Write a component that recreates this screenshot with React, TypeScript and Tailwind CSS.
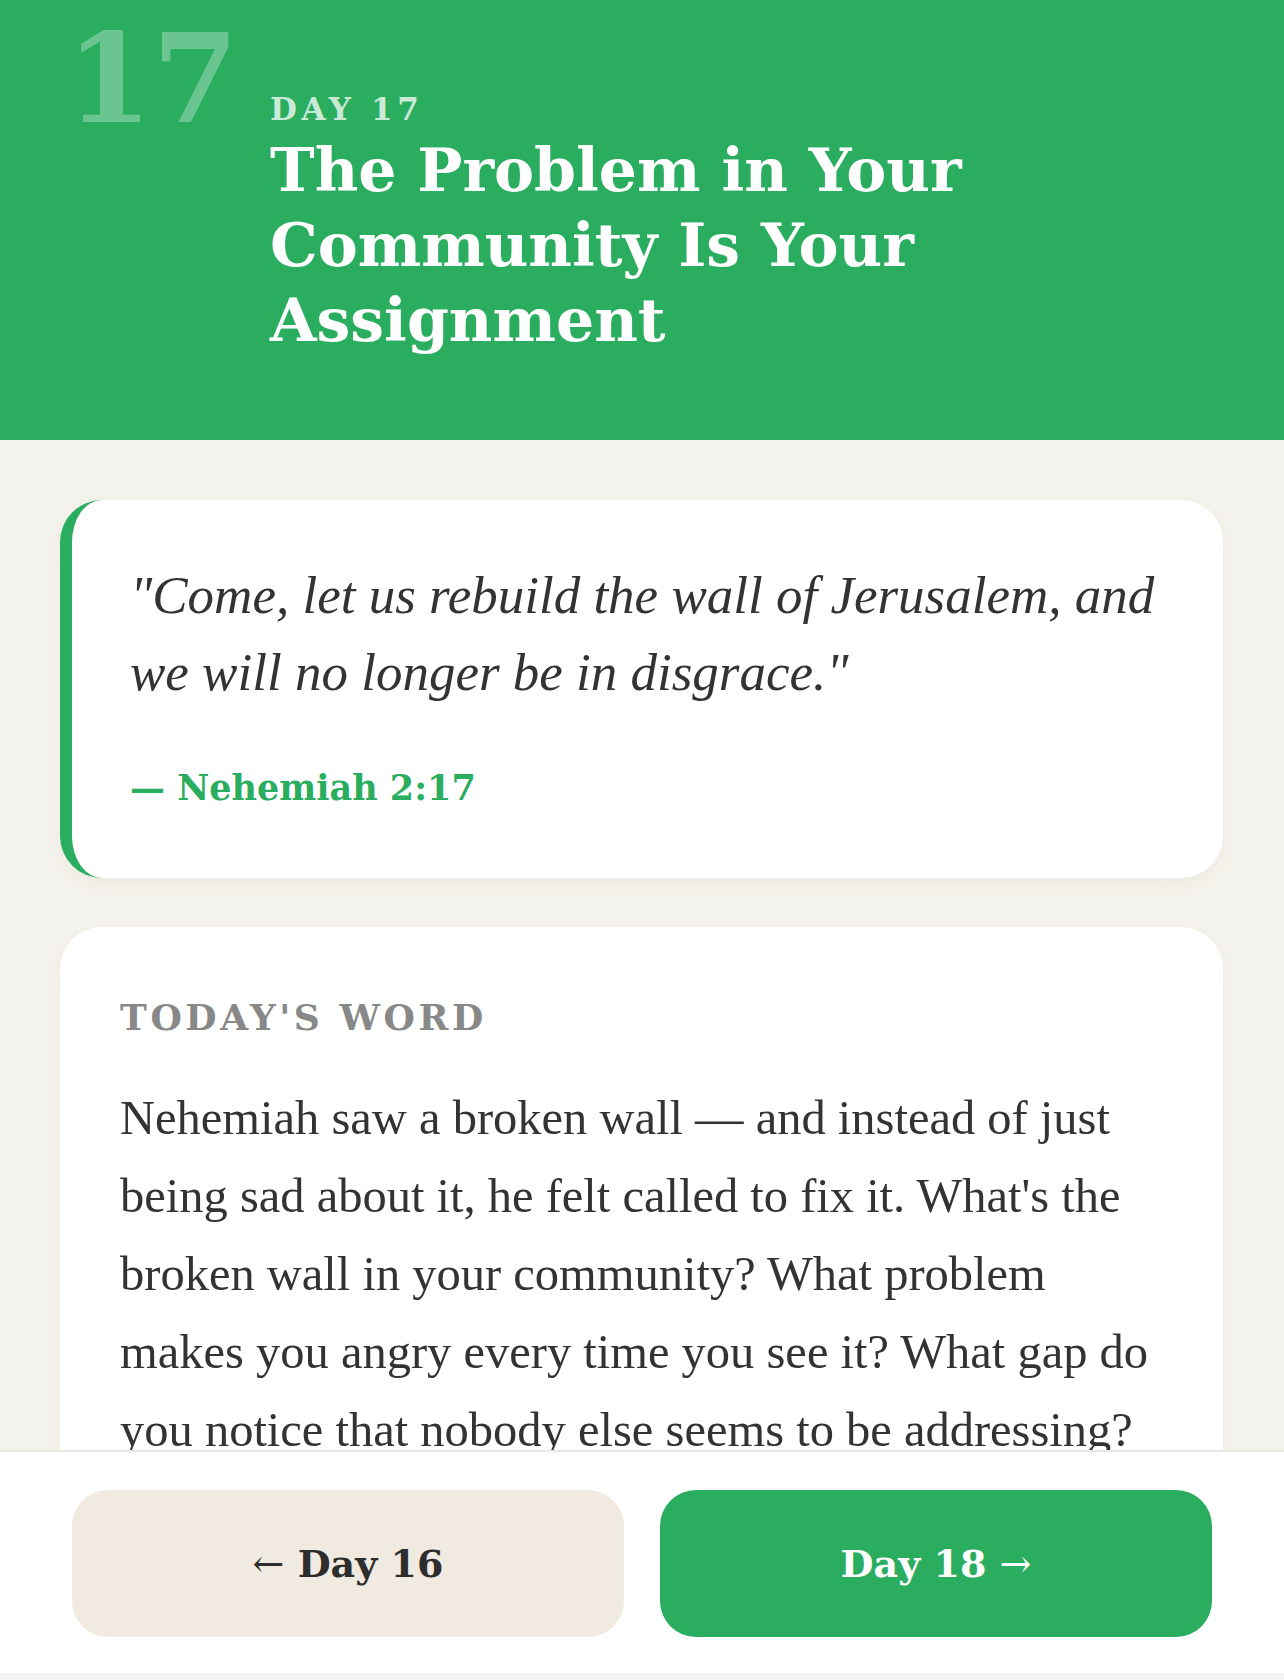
const serif = "font-['Liberation_Serif',serif]";
const boldSerif = "font-['DejaVu_Serif',serif] font-bold";

const Header = () => {
  return (
    <header className="relative shrink-0 bg-[#2bad60] pt-[89px] pb-[82px] pl-[270px] pr-[60px]">
      <span
        className={`absolute left-[66px] top-[17px] text-[124px] leading-none text-white/30 ${boldSerif}`}
      >
        17
      </span>
      <div className={`text-[31px] leading-[40px] tracking-[0.15em] text-white/75 ${boldSerif}`}>
        DAY 17
      </div>
      <h1 className={`mt-[4px] max-w-[900px] text-[60px] leading-[75px] text-white ${boldSerif}`}>
        The Problem in Your Community Is Your Assignment
      </h1>
    </header>
  );
};

const QuoteCard = () => {
  return (
    <div className="rounded-[42px] border-l-[12px] border-[#2bad60] bg-white pt-[57px] pb-[68px] pl-[58px] pr-[56px] shadow-[0_6px_28px_rgba(60,50,30,0.06)]">
      <p className={`text-[53px] leading-[77px] italic text-[#333] ${serif}`}>
        "Come, let us rebuild the wall of Jerusalem, and we will no longer be in disgrace."
      </p>
      <div className={`mt-[55px] text-[35px] leading-[44px] text-[#2bad60] ${boldSerif}`}>
        — Nehemiah 2:17
      </div>
    </div>
  );
};

const WordCard = () => {
  return (
    <div className="mt-[49px] rounded-[42px] bg-white px-[60px] pt-[68px] pb-[200px] shadow-[0_6px_28px_rgba(60,50,30,0.06)]">
      <div className={`text-[36px] leading-[44px] tracking-[0.1em] text-[#888] ${boldSerif}`}>
        TODAY'S WORD
      </div>
      <p className={`mt-[40px] text-[48.5px] leading-[78px] text-[#333] ${serif}`}>
        Nehemiah saw a broken wall — and instead of just being sad about it, he felt called to
        fix it. What's the broken wall in your community? What problem makes you angry every
        time you see it? What gap do you notice that nobody else seems to be addressing?
      </p>
    </div>
  );
};

const BottomNav = () => {
  return (
    <nav className="shrink-0 border-t-2 border-[#ebe7e0] bg-white px-[72px] pt-[38px] pb-[36px]">
      <div className="flex gap-[36px]">
        <button className="flex h-[147px] flex-1 items-center justify-center rounded-[36px] bg-[#f0eae1] text-[#2d2d2d]">
          <span className={`text-[38px] ${boldSerif}`}>
            <span className="font-normal">←</span> Day 16
          </span>
        </button>
        <button className="flex h-[147px] flex-1 items-center justify-center rounded-[36px] bg-[#2bad60] text-white">
          <span className={`text-[38px] ${boldSerif}`}>
            Day 18 <span className="font-normal">→</span>
          </span>
        </button>
      </div>
    </nav>
  );
};

export default function App() {
  return (
    <div className="flex h-[1680px] flex-col overflow-hidden bg-[#f6f4ee]">
      <Header />
      <main className="min-h-0 flex-1 overflow-hidden px-[60px] pt-[60px] pr-[61px]">
        <QuoteCard />
        <WordCard />
      </main>
      <BottomNav />
      <div className="h-[7px] shrink-0 bg-[#f5f4f2]" />
    </div>
  );
}
